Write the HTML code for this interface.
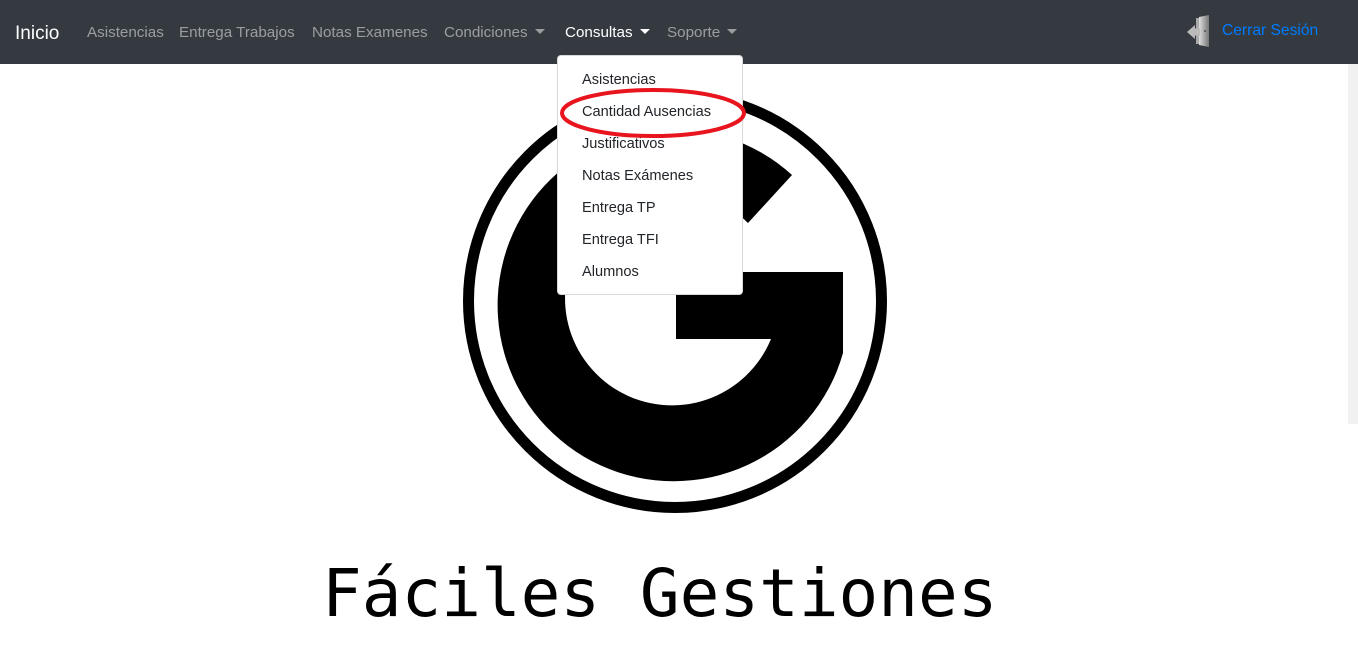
<!DOCTYPE html>
<html><head><meta charset="utf-8"><style>
body{margin:0;width:1358px;height:648px;overflow:hidden;background:#fff;font-family:"Liberation Sans",sans-serif;position:relative}
.nav{position:absolute;left:0;top:0;width:1358px;height:64px;background:#343a40}
.nav span{position:absolute;top:24px;font-size:15.2px;color:rgba(255,255,255,.5);white-space:nowrap}
.brand{font-size:19px!important;color:#fff!important;top:23px!important}
.car{display:inline-block;width:0;height:0;border-left:5px solid transparent;border-right:5px solid transparent;border-top:5px solid;vertical-align:3px;margin-left:7px}
.dd{position:absolute;left:557px;top:55px;width:184px;height:238px;background:#fff;border:1px solid rgba(0,0,0,.15);border-radius:4px}
.dd div{position:absolute;left:24px;font-size:14.6px;color:#212529;white-space:nowrap}
.title{position:absolute;left:322px;top:554px;font-family:"DejaVu Sans Mono","Liberation Mono",monospace;font-size:66px;color:#000;white-space:nowrap;line-height:80px}
</style></head><body>
<div class="nav">
<span class="brand" style="left:15px">Inicio</span>
<span style="left:87px">Asistencias</span>
<span style="left:179px">Entrega Trabajos</span>
<span style="left:312px">Notas Examenes</span>
<span style="left:444px">Condiciones<i class="car"></i></span>
<span style="left:565px;color:#fff">Consultas<i class="car"></i></span>
<span style="left:667px">Soporte<i class="car"></i></span>
<svg style="position:absolute;left:1186px;top:14px" width="32" height="34" viewBox="0 0 32 34"><defs><linearGradient id="g" x1="0" x2="1"><stop offset="0" stop-color="#ddd"/><stop offset="1" stop-color="#777"/></linearGradient></defs><path d="M13 3 L23 1 L23 33 L13 31 Z" fill="url(#g)"/><rect x="10" y="4" width="3" height="26" fill="#aaa"/><path d="M1 18 L9 11 L9 14.5 L14 14.5 L14 21.5 L9 21.5 L9 25 Z" fill="#bbb"/><circle cx="19" cy="17" r="0.9" fill="#333"/></svg>
<span style="left:1222px;top:22px!important;color:#007bff;font-size:15.6px!important">Cerrar Sesión</span>
</div>
<div style="position:absolute;left:1348px;top:64px;width:10px;height:360px;background:#f1f1f1"></div>
<svg style="position:absolute;left:0;top:0" width="1358" height="648">
<circle cx="675" cy="301" r="206.5" fill="none" stroke="#000" stroke-width="11"/>
<path d="M792 175 A176 176 0 1 0 843 353 L843 272 L676 272 L676 339 L771 339 A107 107 0 1 1 748 223 Z" fill="#000"/>
</svg>
<div class="dd">
<div style="top:16px">Asistencias</div>
<div style="top:48px">Cantidad Ausencias</div>
<div style="top:80px">Justificativos</div>
<div style="top:112px">Notas Exámenes</div>
<div style="top:144px">Entrega TP</div>
<div style="top:176px">Entrega TFI</div>
<div style="top:208px">Alumnos</div>
</div>
<svg style="position:absolute;left:0;top:0" width="1358" height="648"><ellipse cx="653" cy="113" rx="91" ry="23" fill="none" stroke="#e8141e" stroke-width="4"/></svg>
<div class="title">Fáciles Gestiones</div>
</body></html>
